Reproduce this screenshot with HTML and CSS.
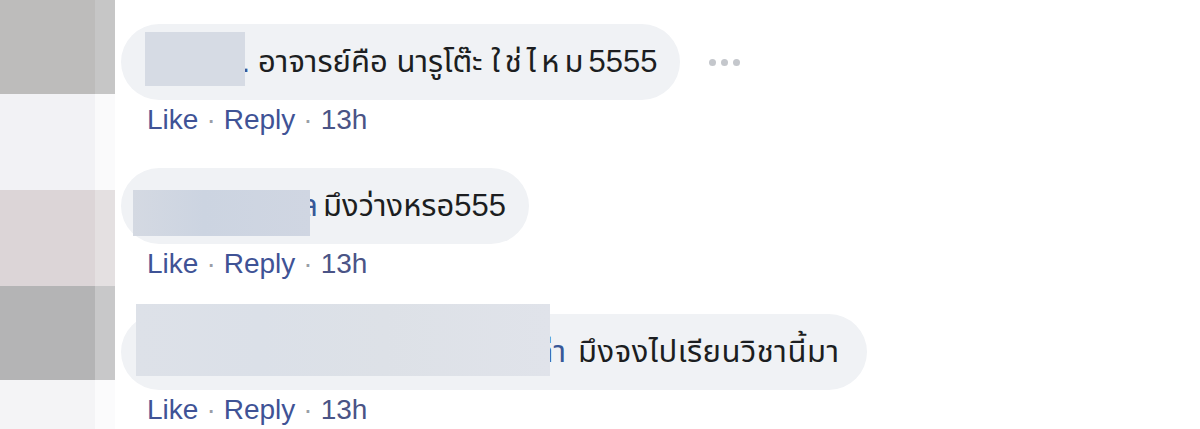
FILE: index.html
```html
<!DOCTYPE html>
<html lang="th">
<head>
<meta charset="utf-8">
<title>Comments</title>
<link rel="stylesheet" href="styles.css">
</head>
<body>
<div class="page">
  <div class="avatars">
    <div class="seg seg-gray1"><div class="main"></div><div class="edge"></div></div>
    <div class="seg seg-light1"><div class="main"></div><div class="edge"></div></div>
    <div class="seg seg-pink"><div class="main"></div><div class="edge"></div></div>
    <div class="seg seg-gray2"><div class="main"></div><div class="edge"></div></div>
    <div class="seg seg-light2"><div class="main"></div><div class="edge"></div></div>
  </div>
  <div class="comments">
    <div class="comment c1">
      <div class="bubble-row">
        <div class="bubble">
          <span class="author">.</span><span class="text">อาจารย์คือ นารูโต๊ะ <span class="wide">ใช่ไหม</span>5555</span>
          <div class="redact"></div>
        </div>
        <div class="more"><span></span><span></span><span></span></div>
      </div>
      <div class="actions"><a class="link">Like</a><span class="sep">·</span><a class="link">Reply</a><span class="sep">·</span><span class="time">13h</span></div>
    </div>
    <div class="comment c2">
      <div class="bubble-row">
        <div class="bubble">
          <span class="author">ล</span><span class="text">มึงว่างหรอ555</span>
          <div class="redact"></div>
        </div>
      </div>
      <div class="actions"><a class="link">Like</a><span class="sep">·</span><a class="link">Reply</a><span class="sep">·</span><span class="time">13h</span></div>
    </div>
    <div class="comment c3">
      <div class="bubble-row">
        <div class="bubble">
          <span class="author">ก่า</span><span class="text">มึงจงไปเรียนวิชานี้มา</span>
          <div class="redact"></div>
        </div>
      </div>
      <div class="actions"><a class="link">Like</a><span class="sep">·</span><a class="link">Reply</a><span class="sep">·</span><span class="time">13h</span></div>
    </div>
  </div>
</div>
</body>
</html>
```
FILE: styles.css
```css
html, body {
  margin: 0;
  padding: 0;
  background: #ffffff;
}
body {
  width: 1200px;
  height: 429px;
  overflow: hidden;
  font-family: "Liberation Sans", "Noto Sans Thai", Tahoma, Arial, sans-serif;
}
.page {
  display: flex;
  height: 429px;
}
.avatars {
  width: 115px;
  display: flex;
  flex-direction: column;
  flex-shrink: 0;
}
.seg {
  display: flex;
}
.seg .main { width: 95px; }
.seg .edge { width: 20px; }
.seg-gray1 { height: 94px; }
.seg-gray1 .main { background: #bdbcbb; }
.seg-gray1 .edge { background: #c6c6c6; }
.seg-light1 { height: 96px; }
.seg-light1 .main { background: #f2f2f5; }
.seg-light1 .edge { background: #fafafb; }
.seg-pink { height: 96px; }
.seg-pink .main { background: #dcd5d7; }
.seg-pink .edge { background: #e4e0e1; }
.seg-gray2 { height: 94px; }
.seg-gray2 .main { background: #b4b4b5; }
.seg-gray2 .edge { background: #c8c8c9; }
.seg-light2 { flex: 1; }
.seg-light2 .main { background: #f4f4f6; }
.seg-light2 .edge { background: #fbfbfc; }

.comments {
  display: flex;
  flex-direction: column;
  padding-left: 6px;
  padding-top: 24px;
}
.comment.c1 { margin-bottom: 33px; }
.comment.c2 { margin-bottom: 35px; }

.bubble-row {
  display: flex;
  align-items: center;
}
.bubble {
  position: relative;
  display: flex;
  align-items: center;
  height: 76px;
  border-radius: 38px;
  background: #f0f2f5;
  padding: 0 23px 0 24px;
  font-size: 31px;
  color: #1c1e21;
  white-space: nowrap;
}
.author {
  display: inline-block;
  color: #385898;
  text-align: right;
  box-sizing: border-box;
}
.c1 .author { width: 113px; padding-right: 8px; }
.c2 .author { width: 178px; padding-right: 5px; }
.c3 .author { width: 433px; padding-right: 12px; }
.c3 .bubble { padding-right: 27px; }
.c3 .text { letter-spacing: 0.5px; }
.wide { letter-spacing: 5px; }

.redact {
  position: absolute;
}
.c1 .redact { left: 24px; top: 8px; width: 100px; height: 54px; background: #d6dbe4; }
.c2 .redact { left: 12px; top: 22px; width: 177px; height: 46px; background: linear-gradient(90deg, #d4d9e2 0%, #ccd4e1 40%, #d0d6e2 100%); }
.c3 .redact { left: 15px; top: -10px; width: 414px; height: 72px; background: linear-gradient(90deg, #dde1e8 0%, #dbe0e8 30%, #dde1e7 60%, #e0e3ea 100%); }

.more {
  display: flex;
  gap: 5px;
  margin-left: 29px;
}
.more span {
  width: 7px;
  height: 7px;
  border-radius: 50%;
  background: #c4c7cc;
}

.actions {
  display: flex;
  align-items: baseline;
  margin-top: 5px;
  padding-left: 26px;
  font-size: 28px;
  line-height: 30px;
  height: 30px;
}
.link { color: #3f5396; text-decoration: none; }
.time { color: #4a5486; }
.sep {
  color: #9a9ea6;
  margin: 0 8px;
}
```
